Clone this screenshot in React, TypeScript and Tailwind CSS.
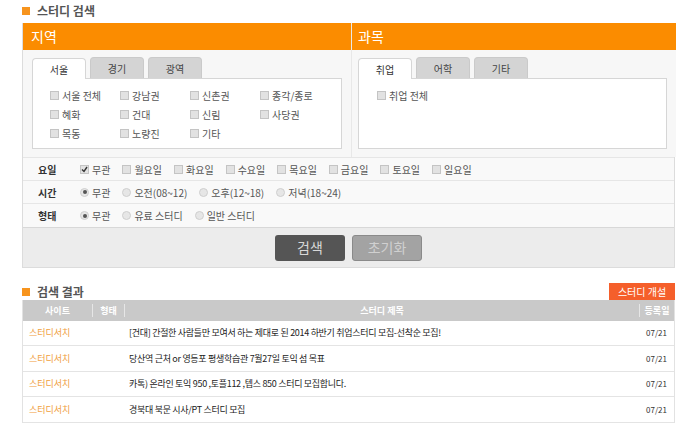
import React from "react";

const FONT = { fontFamily: '"Noto Sans CJK KR", "Noto Sans", sans-serif' };

const seoul = [
  "서울 전체", "강남권", "신촌권", "종각/종로",
  "혜화", "건대", "신림", "사당권",
  "목동", "노량진", "기타",
];

const days = ["월요일", "화요일", "수요일", "목요일", "금요일", "토요일", "일요일"];

const results = [
  "[건대] 간절한 사람들만 모여서 하는 제대로 된 2014 하반기 취업스터디 모집-선착순 모집!",
  "당산역 근처 or 영등포 평생학습관 7월27일 토익 섬 목표",
  "카톡) 온라인 토익 950 ,토플112 ,텝스 850 스터디 모집합니다.",
  "경북대 북문 시사/PT 스터디 모집",
];

function Box({ checked }: { checked?: boolean }) {
  return (
    <span className="flex h-[9px] w-[9px] shrink-0 items-center justify-center border border-[#c4c4c4] bg-[#e2e2e2]">
      {checked && (
        <svg width="7" height="7" viewBox="0 0 7 7">
          <path d="M1 3.5 L3 5.5 L6 1" stroke="#333" strokeWidth="1.4" fill="none" />
        </svg>
      )}
    </span>
  );
}

function Radio({ checked }: { checked?: boolean }) {
  return (
    <span className="flex h-[9px] w-[9px] shrink-0 items-center justify-center rounded-full border border-[#cfcfcf] bg-[#e6e6e6]">
      {checked && <span className="h-[4px] w-[4px] rounded-full bg-[#555]" />}
    </span>
  );
}

function Tabs({ items }: { items: string[] }) {
  return (
    <div className="flex h-[21px] items-end gap-[4px]">
      {items.map((t, i) => (
        <div
          key={t}
          className={
            i === 0
              ? "relative -mb-px flex h-[21px] w-[54px] items-center justify-center rounded-t-[4px] border border-b-0 border-[#d6d6d6] bg-white text-[10px] text-[#333]"
              : "flex h-[21px] w-[54px] items-center justify-center rounded-t-[4px] border border-b-0 border-[#cacaca] bg-[#d4d4d4] text-[10px] text-[#444]"
          }
        >
          {t}
        </div>
      ))}
    </div>
  );
}

export default function App() {
  return (
    <div className="h-[427px] w-[700px] overflow-hidden bg-white" style={FONT}>
      {/* search title */}
      <div className="flex h-[23px] items-center gap-[7px] pl-[22px] pb-[1px]">
        <span className="h-[8px] w-[8px] bg-[#f7941d]" />
        <span className="text-[12px] font-semibold text-[#555]">스터디 검색</span>
      </div>

      <div className="ml-[22px] w-[653px] border-x border-b border-[#dcdcdc]">
        <div className="grid grid-cols-[328px_325px]">
          {/* 지역 */}
          <div className="flex flex-col">
            <div className="flex h-[27px] items-center bg-[#fb8c00] pl-[8px] text-[14px] text-white">지역</div>
            <div className="h-[107px] bg-[#f7f7f7] pl-[9px] pr-[9px] pt-[7px]">
              <Tabs items={["서울", "경기", "광역"]} />
              <div className="grid h-[71px] grid-cols-[70px_70px_70px_70px] content-start gap-y-[6px] border border-[#d6d6d6] bg-white pl-[17px] pt-[10px]">
                {seoul.map((s) => (
                  <label key={s} className="flex h-[13px] items-center gap-[3px] text-[10px] text-[#555]">
                    <Box />
                    {s}
                  </label>
                ))}
              </div>
            </div>
          </div>
          {/* 과목 */}
          <div className="flex flex-col border-l border-[#e8e8e8]">
            <div className="flex h-[27px] items-center bg-[#fb8c00] pl-[6px] text-[14px] text-white">과목</div>
            <div className="h-[107px] bg-[#f7f7f7] pl-[6px] pr-[9px] pt-[7px]">
              <Tabs items={["취업", "어학", "기타"]} />
              <div className="h-[71px] border border-[#d6d6d6] bg-white pl-[18px] pt-[10px]">
                <label className="flex h-[13px] items-center gap-[3px] text-[10px] text-[#555]">
                  <Box />
                  취업 전체
                </label>
              </div>
            </div>
          </div>
        </div>

        {/* option rows */}
        <div className="flex h-[23px] items-center border-t border-[#e6e6e6] bg-[#f9f9f9] text-[10px] text-[#555]">
          <span className="w-[57px] pl-[15px] font-bold text-[#333]">요일</span>
          <div className="flex items-center gap-[12px]">
            <label className="flex items-center gap-[3px]">
              <Box checked />
              무관
            </label>
            {days.map((d) => (
              <label key={d} className="flex items-center gap-[3px]">
                <Box />
                {d}
              </label>
            ))}
          </div>
        </div>
        <div className="flex h-[23px] items-center border-t border-[#e6e6e6] bg-[#f9f9f9] text-[10px] text-[#555]">
          <span className="w-[57px] pl-[15px] font-bold text-[#333]">시간</span>
          <div className="flex items-center gap-[12px]">
            {["무관", "오전(08~12)", "오후(12~18)", "저녁(18~24)"].map((t, i) => (
              <label key={t} className="flex items-center gap-[3px]">
                <Radio checked={i === 0} />
                {t}
              </label>
            ))}
          </div>
        </div>
        <div className="flex h-[24px] items-center border-t border-[#e6e6e6] bg-[#f9f9f9] text-[10px] text-[#555]">
          <span className="w-[57px] pl-[15px] font-bold text-[#333]">형태</span>
          <div className="flex items-center gap-[12px]">
            {["무관", "유료 스터디", "일반 스터디"].map((t, i) => (
              <label key={t} className="flex items-center gap-[3px]">
                <Radio checked={i === 0} />
                {t}
              </label>
            ))}
          </div>
        </div>

        {/* buttons */}
        <div className="flex h-[40px] items-center justify-center gap-[7px] border-t border-[#d8d8d8] bg-[#ececec]">
          <button className="h-[26px] w-[70px] rounded-[3px] bg-[#555555] text-[14px] text-[#d8d8d8]">검색</button>
          <button className="h-[26px] w-[70px] rounded-[3px] border border-[#8a8a8a] bg-[#a3a3a3] text-[14px] text-[#d0d0d0]">초기화</button>
        </div>
      </div>

      {/* results title */}
      <div className="mt-[15px] flex h-[17px] w-[675px] items-center justify-between pl-[22px]">
        <div className="flex items-center gap-[7px]">
          <span className="h-[8px] w-[8px] bg-[#f7941d]" />
          <span className="text-[12px] leading-[17px] font-semibold text-[#555]">검색 결과</span>
        </div>
        <div className="flex h-[17px] w-[66px] items-center justify-center bg-[#f55f2b] text-[10px] text-white">스터디 개설</div>
      </div>

      <div className="ml-[22px] w-[653px] border-x border-[#e2e2e2]">
        <div className="flex h-[21px] items-center bg-[#c9c9c9] text-[9px] font-bold text-white">
          <span className="w-[69px] text-center">사이트</span>
          <span className="h-[13px] w-px bg-[#e6e6e6]" />
          <span className="w-[31px] text-center">형태</span>
          <span className="h-[13px] w-px bg-[#e6e6e6]" />
          <span className="flex-1 text-center">스터디 제목</span>
          <span className="h-[13px] w-px bg-[#e6e6e6]" />
          <span className="w-[34px] text-center">등록일</span>
        </div>
        {results.map((r, i) => (
          <div
            key={i}
            className={
              i % 2 === 0
                ? "flex h-[25px] items-center border-b border-[#e4e4e4] text-[9px]"
                : "flex h-[26px] items-center border-b border-[#e4e4e4] text-[9px]"
            }
          >
            <span className="w-[101px] pl-[6px] text-[#f0a040]">스터디서치</span>
            <span className="flex-1 tracking-[-0.3px] pl-[5px] text-[#222]">{r}</span>
            <span className="pr-[7px] text-[8px] text-[#333]">07/21</span>
          </div>
        ))}
      </div>
    </div>
  );
}
